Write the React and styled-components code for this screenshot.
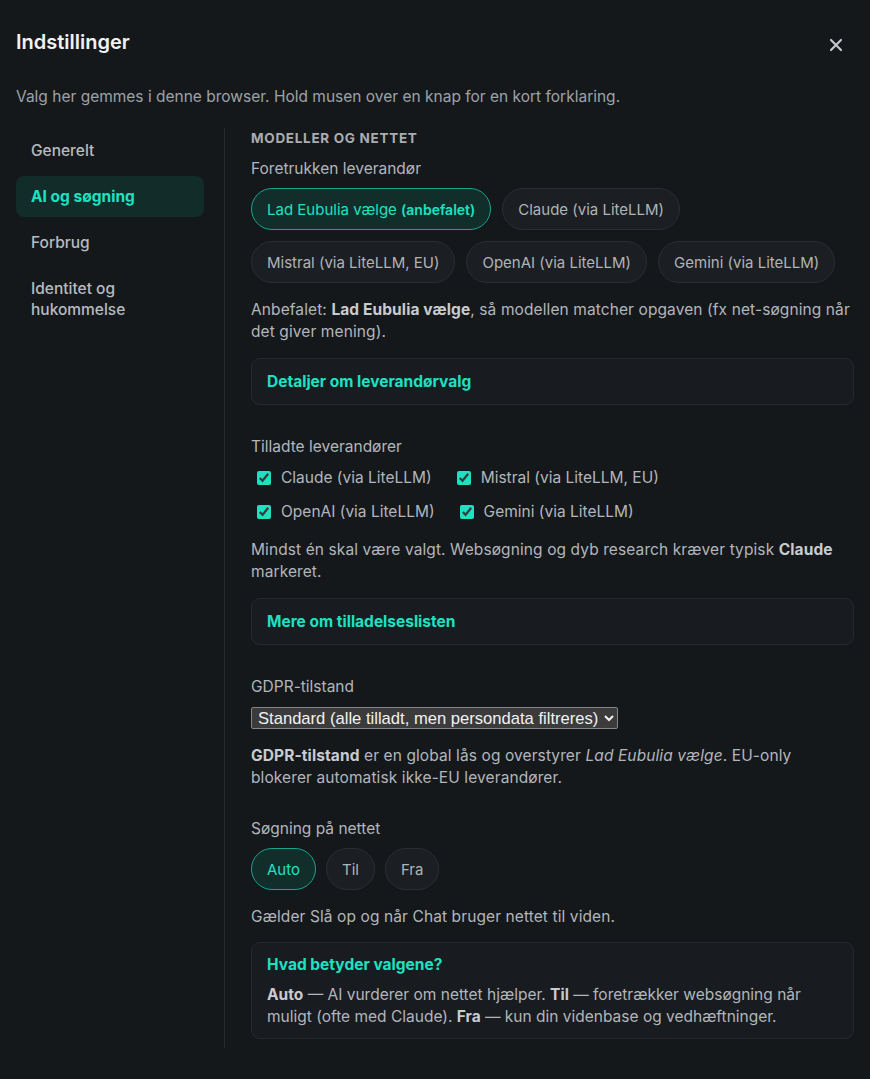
import React, { useState } from 'react';
import styled, { createGlobalStyle } from 'styled-components';

const GlobalStyle = createGlobalStyle`
  html, body { margin: 0; padding: 0; background: #15181b; }
  body {
    font-family: Inter, "Noto Sans", sans-serif;
    color: #c9ccd0;
    -webkit-font-smoothing: antialiased;
  }
  * { box-sizing: border-box; }
`;

const TEAL = '#1de2c2';

const providers = [
  'Claude (via LiteLLM)',
  'Mistral (via LiteLLM, EU)',
  'OpenAI (via LiteLLM)',
  'Gemini (via LiteLLM)',
];

// checkboxes are shown two per row
const checkRows = [providers.slice(0, 2), providers.slice(2)];

const navItems = ['Generelt', 'AI og søgning', 'Forbrug', 'Identitet og hukommelse'];

const App = () => {
  const [preferred, setPreferred] = useState('auto');
  const [allowed, setAllowed] = useState(providers);
  const [search, setSearch] = useState('Auto');

  const toggle = (p) =>
    setAllowed((cur) => (cur.includes(p) ? cur.filter((x) => x !== p) : [...cur, p]));

  return (
    <>
      <GlobalStyle />
      <Dialog>
        <Header>
          <Title>Indstillinger</Title>
          <CloseButton aria-label="Luk">
            <svg width="14" height="14" viewBox="0 0 14 14">
              <path d="M2 2 L12 12 M12 2 L2 12" stroke="#c4c7cb" strokeWidth="2.2" strokeLinecap="round" />
            </svg>
          </CloseButton>
        </Header>
        <Intro>Valg her gemmes i denne browser. Hold musen over en knap for en kort forklaring.</Intro>

        <Body>
          <Nav>
            {navItems.map((item) => (
              <NavItem key={item} $active={item === 'AI og søgning'}>{item}</NavItem>
            ))}
          </Nav>

          <Content>
            <SectionTitle>Modeller og nettet</SectionTitle>
            <Label>Foretrukken leverandør</Label>
            <PillRow>
              <Pill $active={preferred === 'auto'} onClick={() => setPreferred('auto')}>
                Lad Eubulia vælge <Small>(anbefalet)</Small>
              </Pill>
              {providers.map((p) => (
                <Pill key={p} $active={preferred === p} onClick={() => setPreferred(p)}>{p}</Pill>
              ))}
            </PillRow>
            <Help>
              Anbefalet: <b>Lad Eubulia vælge</b>, så modellen matcher opgaven (fx net-søgning når det giver mening).
            </Help>
            <Details>
              <summary>Detaljer om leverandørvalg</summary>
            </Details>

            <Group>
              <Label>Tilladte leverandører</Label>
              <CheckList>
                {checkRows.map((row, i) => (
                  <CheckRow key={i}>
                    {row.map((p) => (
                      <CheckItem key={p}>
                        <input type="checkbox" checked={allowed.includes(p)} onChange={() => toggle(p)} />
                        {p}
                      </CheckItem>
                    ))}
                  </CheckRow>
                ))}
              </CheckList>
              <Help>
                Mindst én skal være valgt. Websøgning og dyb research kræver typisk <b>Claude</b> markeret.
              </Help>
              <Details>
                <summary>Mere om tilladelseslisten</summary>
              </Details>
            </Group>

            <Group>
              <Label>GDPR-tilstand</Label>
              <Select defaultValue="standard">
                <option value="standard">Standard (alle tilladt, men persondata filtreres)</option>
                <option value="eu">EU-only</option>
              </Select>
              <Help>
                <b>GDPR-tilstand</b> er en global lås og overstyrer <i>Lad Eubulia vælge</i>. EU-only
                blokerer automatisk ikke-EU leverandører.
              </Help>
            </Group>

            <Group $tight>
              <Label>Søgning på nettet</Label>
              <PillRow $compact>
                {['Auto', 'Til', 'Fra'].map((opt) => (
                  <Pill key={opt} $active={search === opt} $compact onClick={() => setSearch(opt)}>{opt}</Pill>
                ))}
              </PillRow>
              <Help>Gælder Slå op og når Chat bruger nettet til viden.</Help>
              <InfoBox>
                <InfoTitle>Hvad betyder valgene?</InfoTitle>
                <InfoText>
                  <b>Auto</b> — AI vurderer om nettet hjælper. <b>Til</b> — foretrækker websøgning når
                  muligt (ofte med Claude). <b>Fra</b> — kun din videnbase og vedhæftninger.
                </InfoText>
              </InfoBox>
            </Group>
          </Content>
        </Body>
      </Dialog>
    </>
  );
};

export default App;

const Dialog = styled.div`
  width: 870px;
  min-height: 1079px;
  padding: 28px 16px 32px 16px;
  background: #15181b;
`;

const Header = styled.div`
  display: flex; align-items: center; justify-content: space-between;
  height: 28px;
`;

const Title = styled.h1`
  margin: 0; font-size: 20px; font-weight: 600; color: #f1f2f4; letter-spacing: 0;
`;

const CloseButton = styled.button`
  background: none; border: none; padding: 4px; margin-right: 7px; margin-top: 6px;
  display: flex; cursor: pointer;
`;

const Intro = styled.p`
  margin: 31px 0 0 0; font-size: 15.5px; line-height: 20px; color: #9da2a8;
`;

const Body = styled.div`
  display: flex; margin-top: 21px;
`;

const Nav = styled.nav`
  width: 209px; padding: 2px 20px 0 0; flex-shrink: 0;
  display: flex; flex-direction: column; gap: 5px;
  border-right: 1px solid #262a2e;
`;

const NavItem = styled.div`
  padding: 10px 15px;
  border-radius: 8px;
  font-size: 15.5px; line-height: 21px;
  font-weight: ${({ $active }) => ($active ? 700 : 500)};
  color: ${({ $active }) => ($active ? TEAL : '#b7bbc0')};
  background: ${({ $active }) => ($active ? '#122c29' : 'transparent')};
`;

const Content = styled.main`
  flex: 1; padding-left: 26px; padding-bottom: 9px;
`;

const SectionTitle = styled.h2`
  margin: 0; font-size: 13.5px; font-weight: 700; letter-spacing: 0.7px;
  text-transform: uppercase; color: #a9adb2; line-height: 21px;
`;

const Label = styled.div`
  margin-top: 9px; font-size: 15.5px; color: #b2b6bb; line-height: 21px;
`;

const PillRow = styled.div`
  display: flex; flex-wrap: wrap; margin-top: 9px;
  gap: ${({ $compact }) => ($compact ? '10px' : '11px')};
`;

const Pill = styled.button`
  height: 42px;
  padding: ${({ $compact }) => ($compact ? '0 15px' : '0 15px')};
  border-radius: 21px;
  font-family: inherit; font-size: 15px; font-weight: 400;
  color: ${({ $active }) => ($active ? TEAL : '#b0b4b9')};
  background: ${({ $active }) => ($active ? '#112e2a' : '#1b1e22')};
  border: 1px solid ${({ $active }) => ($active ? '#17a58d' : '#2a2e33')};
  cursor: pointer;
`;

const Small = styled.span`
  font-size: 14px; font-weight: 600;
`;

const Help = styled.p`
  margin: 16px 0 0 0; font-size: 15.5px; line-height: 21.5px; color: #b2b6bb;
  letter-spacing: 0.1px;
  b { font-weight: 700; color: #c8cbcf; }
`;

const Details = styled.details`
  margin-top: 16px;
  border: 1px solid #262a2e; border-radius: 9px; background: #181b1f;
  summary {
    list-style: none; padding: 12px 15px; line-height: 21px;
    font-size: 15.5px; font-weight: 700; color: ${TEAL}; cursor: pointer;
  }
  summary::-webkit-details-marker { display: none; }
`;

const Group = styled.section`
  margin-top: ${({ $tight }) => ($tight ? '30px' : '31px')};
  & > ${Label}:first-child { margin-top: 0; }
`;

const CheckList = styled.div`
  display: flex; flex-direction: column; gap: 12px;
  margin-top: 10px; padding-left: 6px;
`;

const CheckRow = styled.div`
  display: flex; gap: 25px;
`;

const CheckItem = styled.label`
  display: flex; align-items: center; gap: 10px;
  font-size: 15.5px; color: #b2b6bb; line-height: 22px;
  input {
    margin: 0; width: 14px; height: 14px; accent-color: #1de2c2; color-scheme: dark;
  }
`;

const Select = styled.select`
  display: block; margin-top: 10px; height: 22px; padding: 0 2px;
  font-family: "Liberation Sans", Arial, sans-serif; font-size: 16.6px;
  color-scheme: dark; color: #f2f2f2; background: #3b3b3b;
  border: 1px solid #858585; border-radius: 2px;
`;

const InfoBox = styled.div`
  margin-top: 14px; padding: 11px 15px 10px;
  border: 1px solid #262a2e; border-radius: 9px; background: #181b1f;
`;

const InfoTitle = styled.div`
  font-size: 15.5px; font-weight: 700; color: ${TEAL}; line-height: 21px;
`;

const InfoText = styled.p`
  margin: 9px 0 0 0; font-size: 15.5px; line-height: 22px; color: #b2b6bb;
  b { font-weight: 700; color: #c8cbcf; }
`;
